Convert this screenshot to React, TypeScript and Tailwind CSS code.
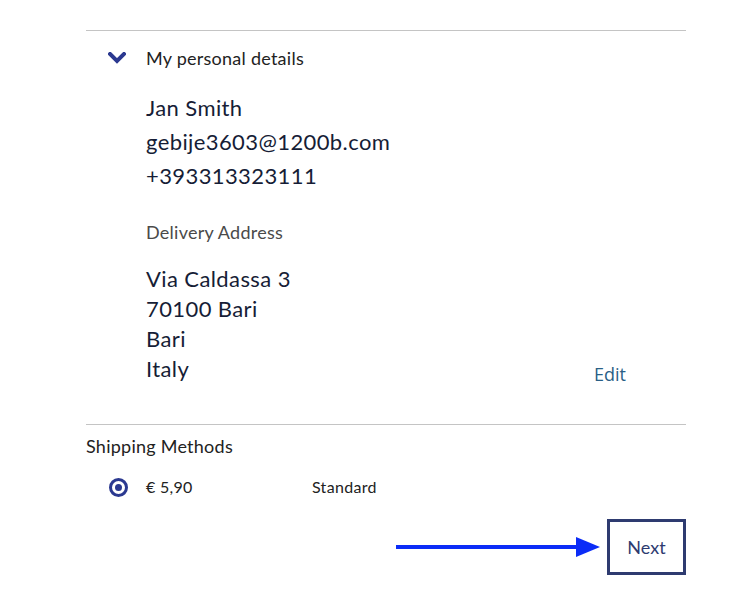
import React from "react";

const font = { fontFamily: "Lato, 'Noto Sans', sans-serif" };

function Chevron() {
  return (
    <svg width="18" height="12" viewBox="0 0 18 12" className="block">
      <path d="M2 2 L9 9 L16 2" fill="none" stroke="#2b3990" strokeWidth="4" strokeLinecap="square" />
    </svg>
  );
}

export default function App() {
  return (
    <div className="w-[744px] h-[600px] bg-white text-[#161d36] overflow-hidden" style={font}>
      <div className="ml-[86px] w-[600px] pt-[30px]">
        <div className="border-t border-[#c4c4c4]" />

        {/* Personal details */}
        <div className="flex items-center h-[54px]">
          <div className="w-[60px] pl-[22px]">
            <Chevron />
          </div>
          <span className="text-[18px] tracking-[0.25px] text-[#222]">My personal details</span>
        </div>

        <div className="pl-[60px] relative">
          <div className="text-[22px] tracking-[0.4px] leading-[34px] pt-[6px]">
            <div>Jan Smith</div>
            <div>gebije3603@1200b.com</div>
            <div>+393313323111</div>
          </div>

          <div className="mt-[27px] text-[18px] tracking-[0.25px] leading-[24px] text-[#4a4a4a]">Delivery Address</div>

          <div className="mt-[20px] text-[22px] tracking-[0.4px] leading-[30px] pb-[40px]">
            <div>Via Caldassa 3</div>
            <div>70100 Bari</div>
            <div>Bari</div>
            <div>Italy</div>
          </div>

          <a
            href="#"
            className="absolute right-[60px] bottom-[36px] text-[18px] text-[#2a5f86]"
            style={{ fontFamily: "'Open Sans', sans-serif" }}
          >
            Edit
          </a>
        </div>

        <div className="border-t border-[#c4c4c4]" />

        {/* Shipping */}
        <div className="pt-[10px] text-[18px] tracking-[0.25px] leading-[22px] text-[#222]">Shipping Methods</div>

        <div className="flex items-center mt-[18px] h-[24px] text-[16px] tracking-[0.3px] text-[#222]">
          <div className="w-[60px] pl-[23px]">
            <span className="flex w-[19px] h-[19px] rounded-full border-[3px] border-[#2b3990] items-center justify-center">
              <span className="w-[7px] h-[7px] rounded-full bg-[#2b3990]" />
            </span>
          </div>
          <span className="w-[166px]">€ 5,90</span>
          <span>Standard</span>
        </div>

        <div className="flex justify-end items-center mt-[20px]">
          <svg width="206" height="24" viewBox="0 0 206 24" className="mr-[5px]">
            <line x1="0" y1="12" x2="184" y2="12" stroke="#0b2cf7" strokeWidth="4" />
            <polygon points="180,2 204,12 180,22" fill="#0b2cf7" />
          </svg>
          <button className="w-[79px] h-[56px] border-[3px] border-[#2e3b70] text-[18px] text-[#2e3b70]">
            Next
          </button>
        </div>
      </div>
    </div>
  );
}
